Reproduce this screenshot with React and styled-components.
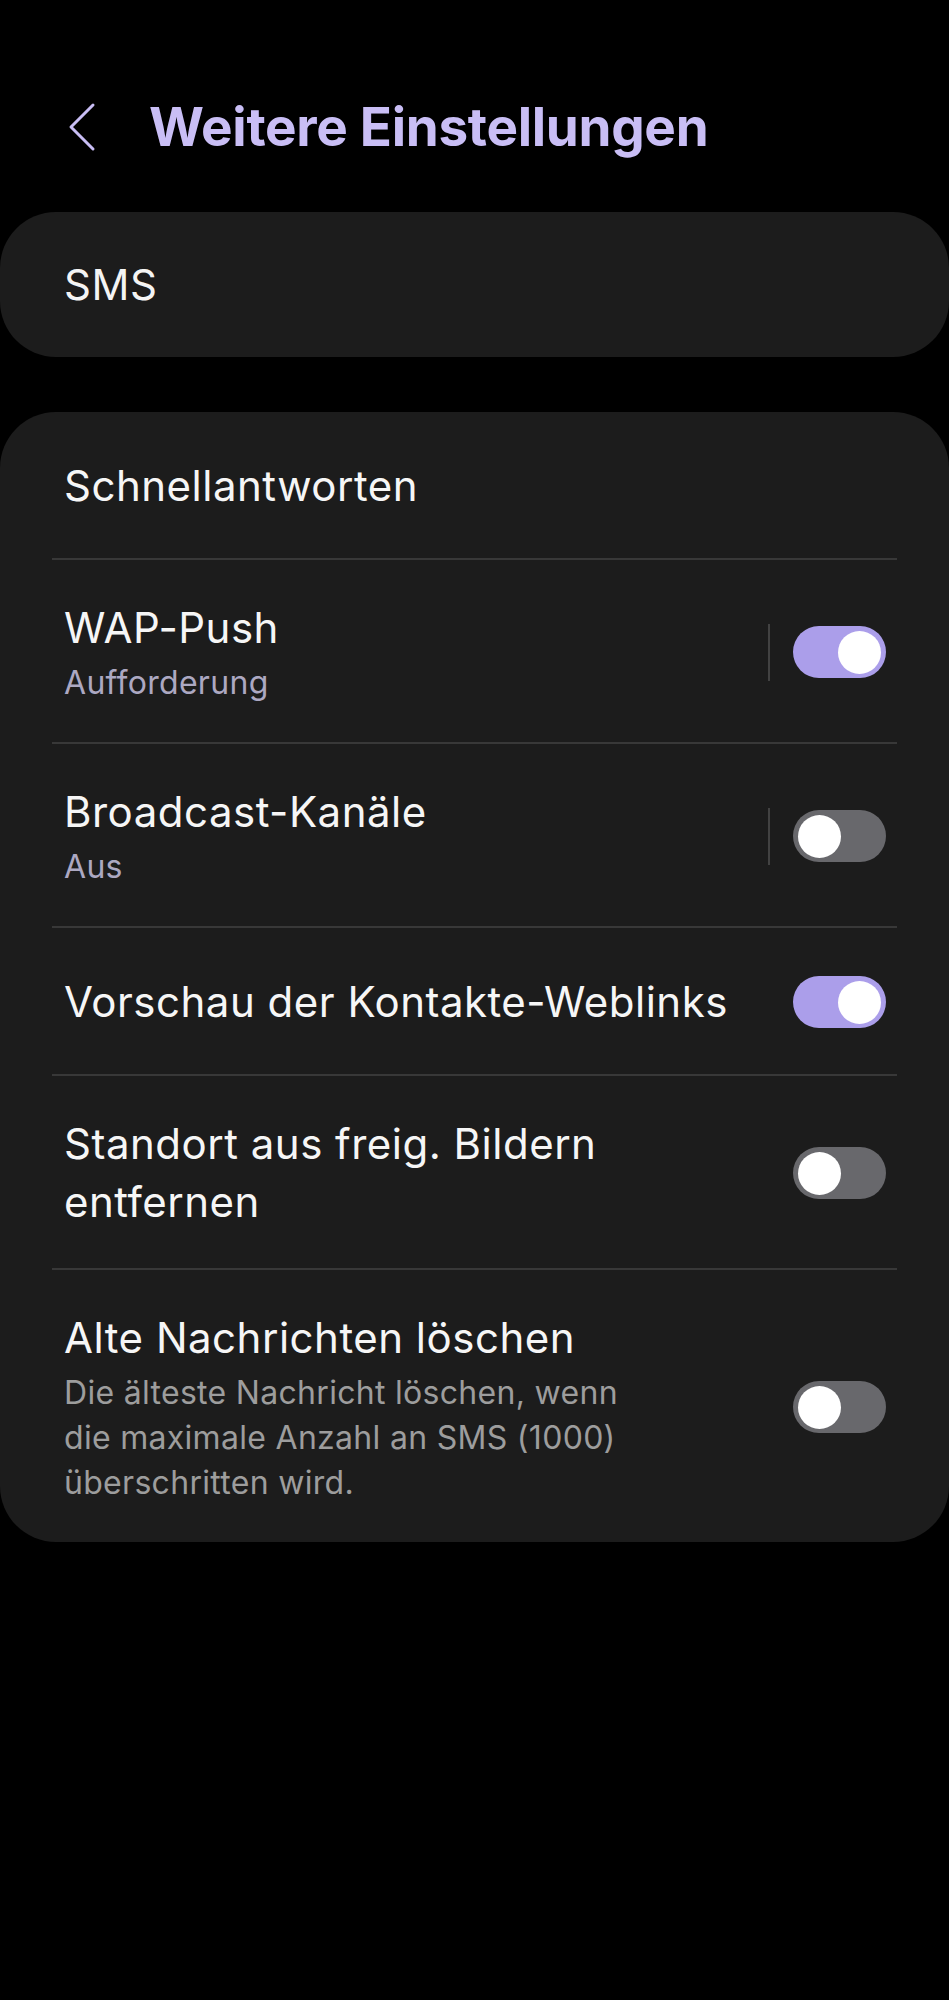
import React from "react";
import styled, { createGlobalStyle } from "styled-components";

const Global = createGlobalStyle`
  html, body { margin: 0; padding: 0; background: #000; }
  body { font-family: Inter, Roboto, "Noto Sans", sans-serif; -webkit-font-smoothing: antialiased; }
  * { box-sizing: border-box; }
`;

const Page = styled.div`
  width: 949px;
  min-height: 2000px;
  background: #000;
  color: #f4f4f4;
`;

const Header = styled.header`
  height: 212px;
  padding: 42px 0 0 68px;
  display: flex;
  align-items: center;
`;

const BackButton = styled.button`
  width: 28px;
  height: 50px;
  padding: 0;
  border: 0;
  background: none;
  display: flex;
  align-items: center;
  justify-content: center;
  margin-right: 53px;
  cursor: pointer;
`;

const Title = styled.h1`
  margin: 0;
  font-size: 53px;
  font-weight: 700;
  color: #c9bef5;
  letter-spacing: -0.3px;
`;

const Card = styled.section`
  background: #1c1c1c;
  border-radius: 56px;
  margin-bottom: 55px;
`;

const SingleCard = styled(Card)`
  height: 145px;
  display: flex;
  align-items: center;
  padding-left: 64px;
  font-size: 42px;
  letter-spacing: 0.5px;
`;

const Row = styled.div`
  display: flex;
  align-items: center;
  padding: ${(p) => (p.$single ? "45px 63px 43px 64px" : "39px 63px 37px 64px")};
`;

const Texts = styled.div`
  flex: 1;
  min-width: 0;
  padding-right: 40px;
`;

const RowTitle = styled.div`
  font-size: 42px;
  line-height: 58px;
  letter-spacing: 0.5px;
  color: #f6f6f6;
`;

const Sub = styled.div`
  margin-top: 3px;
  font-size: 32px;
  line-height: 45px;
  letter-spacing: 0.3px;
  color: ${(p) => (p.$tinted ? "#aca8c2" : "#9d9d9d")};
  max-width: ${(p) => (p.$narrow ? "590px" : "none")};
`;

const Divider = styled.hr`
  margin: 0 52px;
  height: 2px;
  border: 0;
  background: #383838;
`;

const VLine = styled.span`
  width: 2px;
  height: 57px;
  background: #424242;
  margin-right: 23px;
`;

const Track = styled.span`
  position: relative;
  flex: none;
  width: 93px;
  height: 52px;
  border-radius: 26px;
  background: ${(p) => (p.$on ? "#ab9eea" : "#68686c")};
`;

const Thumb = styled.span`
  position: absolute;
  top: 5px;
  ${(p) => (p.$on ? "right: 5px;" : "left: 5px;")}
  width: 43px;
  height: 43px;
  border-radius: 50%;
  background: #fff;
`;

const Toggle = ({ on }) => (
  <Track $on={on}>
    <Thumb $on={on} />
  </Track>
);

const Chevron = () => (
  <svg width="28" height="50" viewBox="0 0 28 50" fill="none">
    <path d="M25 3 L3 25 L25 47" stroke="#c9bef5" strokeWidth="3" strokeLinecap="round" strokeLinejoin="round" />
  </svg>
);

export default function App() {
  return (
    <Page>
      <Global />
      <Header>
        <BackButton aria-label="Zurück">
          <Chevron />
        </BackButton>
        <Title>Weitere Einstellungen</Title>
      </Header>

      <SingleCard>SMS</SingleCard>

      <Card>
        <Row $single>
          <Texts>
            <RowTitle>Schnellantworten</RowTitle>
          </Texts>
        </Row>
        <Divider />
        <Row>
          <Texts>
            <RowTitle>WAP-Push</RowTitle>
            <Sub $tinted>Aufforderung</Sub>
          </Texts>
          <VLine />
          <Toggle on />
        </Row>
        <Divider />
        <Row>
          <Texts>
            <RowTitle>Broadcast-Kanäle</RowTitle>
            <Sub $tinted>Aus</Sub>
          </Texts>
          <VLine />
          <Toggle on={false} />
        </Row>
        <Divider />
        <Row $single>
          <Texts>
            <RowTitle>Vorschau der Kontakte-Weblinks</RowTitle>
          </Texts>
          <Toggle on />
        </Row>
        <Divider />
        <Row>
          <Texts>
            <RowTitle>Standort aus freig. Bildern entfernen</RowTitle>
          </Texts>
          <Toggle on={false} />
        </Row>
        <Divider />
        <Row>
          <Texts>
            <RowTitle>Alte Nachrichten löschen</RowTitle>
            <Sub $narrow>Die älteste Nachricht löschen, wenn die maximale Anzahl an SMS (1000) überschritten wird.</Sub>
          </Texts>
          <Toggle on={false} />
        </Row>
      </Card>
    </Page>
  );
}
